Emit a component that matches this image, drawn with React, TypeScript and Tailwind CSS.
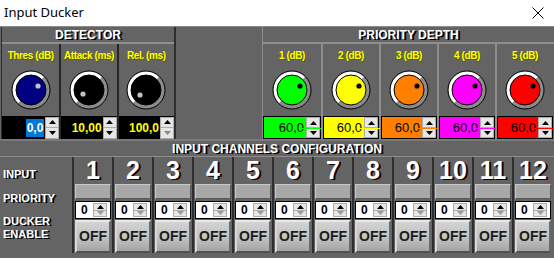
import React from 'react'

const shadow = '[text-shadow:2px_1px_0_#000]'

function Arrow({ dir, color }: { dir: 'up' | 'down'; color: string }) {
  return (
    <svg width="7" height="4" viewBox="0 0 7 4">
      {dir === 'up'
        ? <polygon points="0,4 7,4 3.5,0" fill={color} />
        : <polygon points="0,0 7,0 3.5,4" fill={color} />}
    </svg>
  )
}

function Spin({ h, downColor = '#000', line }: { h: string; downColor?: string; line?: string }) {
  return (
    <div className={`relative flex w-[14px] shrink-0 flex-col ${h}`}>
      <div className="flex flex-1 items-center justify-center border border-[#adadad] bg-[#e6e6e6]">
        <Arrow dir="up" color="#000" />
      </div>
      <div className="flex flex-1 items-center justify-center border border-t-0 border-[#adadad] bg-[#e6e6e6]">
        <Arrow dir="down" color={downColor} />
      </div>
      {line && (
        <div className="absolute left-[-4px] right-[-2px] top-1/2 h-[1px]" style={{ background: line }} />
      )}
    </div>
  )
}

function Knob({ fill, dot, dx, dy }: { fill: string; dot: string; dx: number; dy: number }) {
  const c = 20
  const r = 16.5
  const k = r * Math.SQRT1_2
  return (
    <svg width="40" height="40" viewBox="0 0 40 40">
      <circle cx={c} cy={c} r="19" fill="#8c8c8c" stroke="#000" strokeWidth="1" />
      <path d={`M ${c - k} ${c + k} A ${r} ${r} 0 0 1 ${c + k} ${c - k}`} fill="none" stroke="#fff" strokeWidth="3.5" />
      <circle cx={c} cy={c} r="15" fill={fill} stroke="#000" strokeWidth="1" />
      <circle cx={c + dx} cy={c + dy} r="2.6" fill={dot} />
    </svg>
  )
}

const detector = [
  { label: 'Thres (dB)', fill: '#000080', dx: 7, dy: -4, value: '0,0', selected: true, down: '#000' },
  { label: 'Attack (ms)', fill: '#000', dx: -6, dy: 4, value: '10,00', down: '#000' },
  { label: 'Rel. (ms)', fill: '#000', dx: -6, dy: 5, value: '100,0', down: '#8a8a8a' },
]

const depth = [
  { label: '1 (dB)', color: '#00ff00' },
  { label: '2 (dB)', color: '#ffff00' },
  { label: '3 (dB)', color: '#ff8000' },
  { label: '4 (dB)', color: '#ff00ff' },
  { label: '5 (dB)', color: '#ff0000' },
]

const channels = Array.from({ length: 12 }, (_, i) => i + 1)

const yellowLabel = 'flex h-[19px] items-end justify-center whitespace-nowrap text-[10px] tracking-[-0.4px] text-[#ffff00] [text-shadow:1px_1px_0_#5a5a00]'

export default function App() {
  return (
    <div className="flex h-[258px] w-[554px] flex-col overflow-hidden bg-[#646464] font-['Liberation_Sans',Arial,sans-serif] font-bold">
      {/* Title bar */}
      <div className="flex h-[26px] shrink-0 items-center justify-between bg-white pl-[4px] pr-[10px] font-['Noto_Sans',sans-serif] text-[13px] font-normal text-black">
        <span>Input Ducker</span>
        <svg width="12" height="12" viewBox="0 0 12 12">
          <path d="M0.5 0.5 L11.5 11.5 M11.5 0.5 L0.5 11.5" stroke="#000" strokeWidth="1" />
        </svg>
      </div>

      {/* Top panels */}
      <div className="flex h-[113px] shrink-0 border-t border-[#8a8a8a]">
        {/* Detector */}
        <div className="ml-[1px] flex w-[175px] flex-col border-l border-r-2 border-[#2e2e2e]">
          <div className={`flex h-[17px] items-center justify-center border-b-2 border-[#8e8e8e] text-[12px] text-white ${shadow}`}>
            DETECTOR
          </div>
          <div className="flex flex-1">
            {detector.map((d, i) => (
              <div key={d.label} className={`flex w-[58px] flex-col ${i > 0 ? 'border-l-2 border-[#262626]' : ''}`}>
                <div className={yellowLabel}>{d.label}</div>
                <div className="flex flex-1 items-center justify-center">
                  <Knob fill={d.fill} dot="#c4c4c4" dx={d.dx} dy={d.dy} />
                </div>
                <div className="flex h-[23px] items-center bg-black">
                  <div className="flex flex-1 justify-end pr-[1px] text-[12px] text-[#ffff00]">
                    {d.selected
                      ? <span className="bg-[#0078d7] px-[1px] text-white">{d.value}</span>
                      : <span>{d.value}</span>}
                  </div>
                  <Spin h="h-[22px]" downColor={d.down} />
                </div>
              </div>
            ))}
          </div>
        </div>

        <div className="flex-1" />

        {/* Priority depth */}
        <div className="flex w-[292px] flex-col border-l border-[#8e8e8e]">
          <div className={`flex h-[17px] items-center justify-center border-b-2 border-[#8e8e8e] text-[12px] text-white ${shadow}`}>
            PRIORITY DEPTH
          </div>
          <div className="flex flex-1">
            {depth.map((d, i) => (
              <div key={d.label} className={`flex w-[58px] flex-col ${i > 0 ? 'border-l-2 border-[#8e8e8e]' : ''}`}>
                <div className={yellowLabel}>{d.label}</div>
                <div className="flex flex-1 items-center justify-center">
                  <Knob fill={d.color} dot="#000" dx={8} dy={-4} />
                </div>
                <div className="flex h-[23px] items-center border border-black" style={{ background: d.color }}>
                  <div className="flex flex-1 justify-end pr-[2px] text-[13px] font-normal text-black">
                    60,0
                  </div>
                  <Spin h="h-[21px]" line={d.color} />
                </div>
              </div>
            ))}
          </div>
        </div>
      </div>

      {/* Input channels configuration */}
      <div className="flex flex-1 flex-col border-t-2 border-[#7a7a7a]">
        <div className={`flex h-[16px] items-center justify-center border-b border-[#8e8e8e] text-[12px] text-white ${shadow}`}>
          INPUT CHANNELS CONFIGURATION
        </div>
        <div className="flex">
          <div className={`flex w-[72px] flex-col pl-[3px] text-[11px] leading-[13px] text-white ${shadow}`}>
            <div className="flex h-[27px] items-end pb-[3px]">INPUT</div>
            <div className="flex h-[26px] items-center pt-[2px]">PRIORITY</div>
            <div className="flex h-[34px] flex-col justify-center pt-[2px]">
              <span>DUCKER</span>
              <span>ENABLE</span>
            </div>
          </div>
          {channels.map((n) => (
            <div key={n} className="flex w-[40px] flex-col border-l-2 border-[#2e2e2e]">
              <div className="flex h-[26px] items-center justify-center text-[25px] leading-none text-white [text-shadow:2px_1px_0_#1a0000]">
                {n}
              </div>
              <div className="mx-[1px] mt-[1px] h-[15px] border border-t-[#c8c8c8] border-l-[#c8c8c8] border-b-[#5a5a5a] border-r-[#5a5a5a] bg-[#a8a8a8]" />
              <div className="mx-[1px] mt-[2px] flex h-[18px] items-center border border-black bg-white">
                <span className="flex-1 pl-[5px] text-[12px] text-black">0</span>
                <div className="mr-[3px]">
                  <Spin h="h-[14px]" downColor="#9a9a9a" />
                </div>
              </div>
              <div className="mx-[1px] mt-[1px] flex h-[33px] items-center justify-center border-2 border-t-[#e8e8e8] border-l-[#d8d8d8] border-b-[#505050] border-r-[#6a6a6a] bg-gradient-to-b from-[#d2d2d2] via-[#c4c4c4] to-[#a4a4a4] text-[14px] text-[#1e1e1e]">
                OFF
              </div>
            </div>
          ))}
        </div>
      </div>
    </div>
  )
}
